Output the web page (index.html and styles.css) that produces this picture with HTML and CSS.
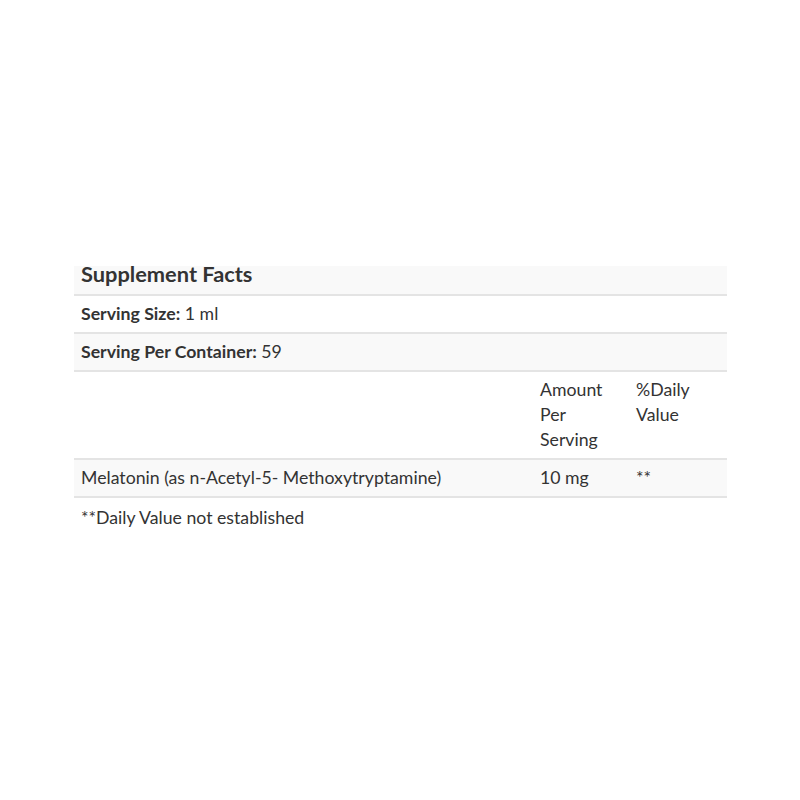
FILE: index.html
```html
<!DOCTYPE html>
<html>
<head>
<meta charset="utf-8">
<link rel="stylesheet" href="styles.css">
</head>
<body>
<div class="page">
  <table class="facts">
    <colgroup>
      <col class="c1"><col class="c2"><col class="c3">
    </colgroup>
    <tbody>
      <tr class="shade title-row"><td colspan="3" class="title">Supplement Facts</td></tr>
      <tr><td colspan="3"><b>Serving Size:</b> 1 ml</td></tr>
      <tr class="shade"><td colspan="3"><b>Serving Per Container:</b> 59</td></tr>
      <tr><td></td><td>Amount Per Serving</td><td>%Daily Value</td></tr>
      <tr class="shade"><td>Melatonin (as n-Acetyl-5- Methoxytryptamine)</td><td>10 mg</td><td>**</td></tr>
    </tbody>
  </table>
  <p class="note">**Daily Value not established</p>
</div>
</body>
</html>
```
FILE: styles.css
```css
html, body { margin: 0; padding: 0; background: #fff; }
body { font-family: Lato, "Open Sans", sans-serif; color: #333; font-size: 17.7px; }
.page { padding: 266px 73px 0 74px; }
.facts { width: 653px; border-collapse: collapse; table-layout: fixed; }
.c1 { width: 459px; }
.c2 { width: 96px; }
.c3 { width: 98px; }
.facts td { padding: 5px 7px 6px; line-height: 25px; vertical-align: top; border-bottom: 2px solid #e4e4e4; }
.facts b { font-weight: 700; }
.shade td { background: #f9f9f9; }
.title-row td.title { font-size: 21.8px; font-weight: 700; padding: 0 7px 13px; line-height: 15px; }
.note { margin: 7px 0 0 7px; line-height: 25px; }
```
